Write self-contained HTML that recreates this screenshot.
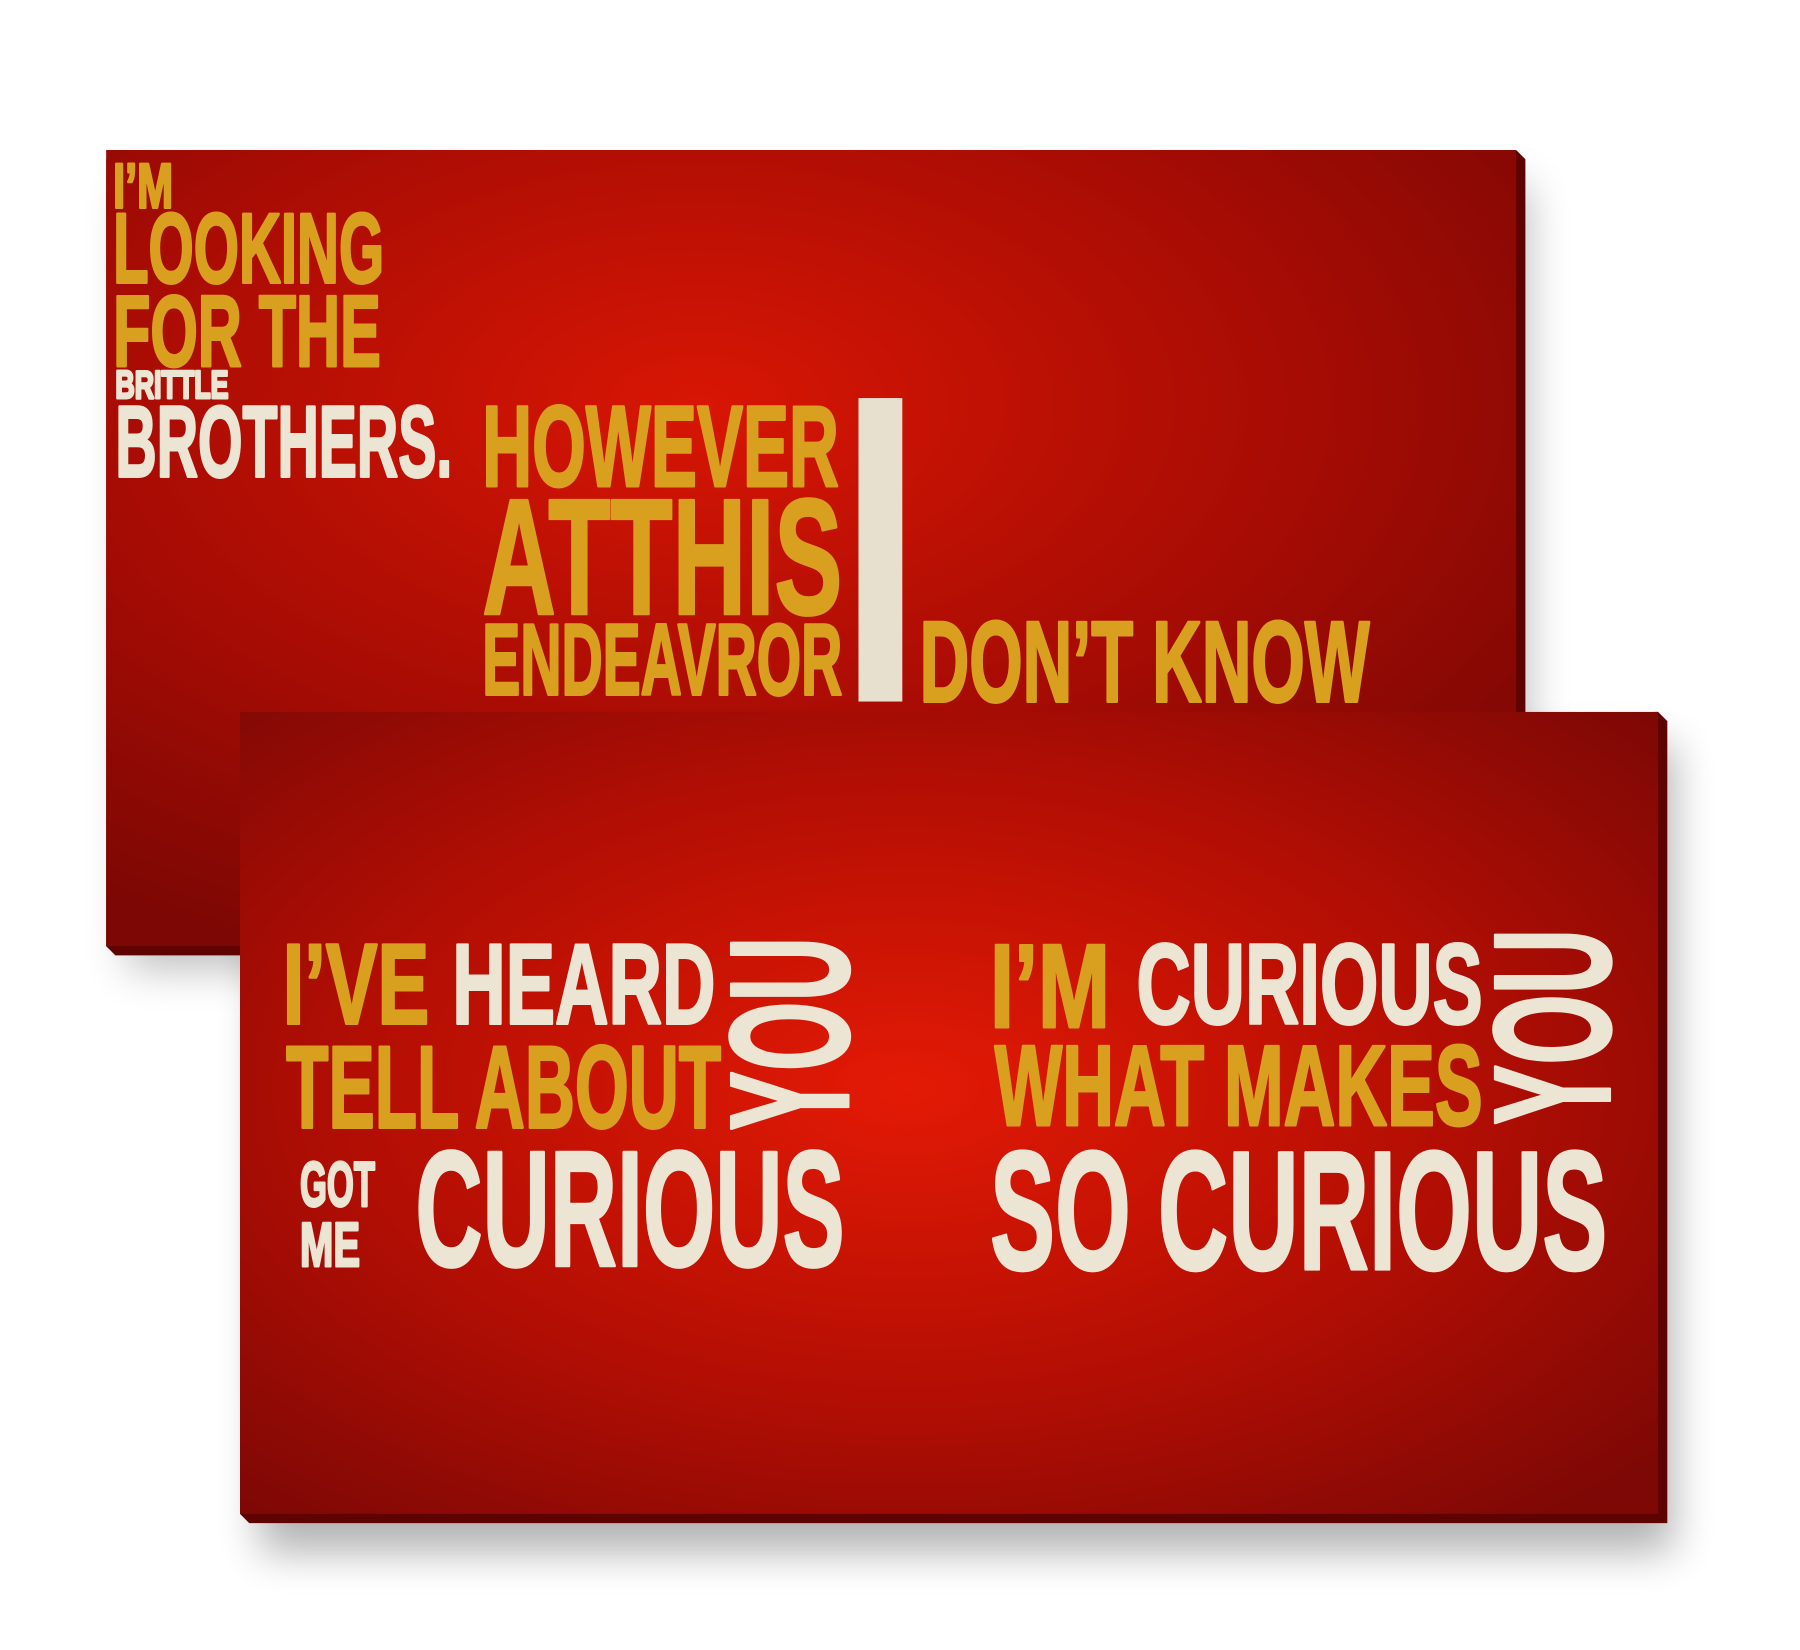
<!DOCTYPE html>
<html><head><meta charset="utf-8"><style>
html,body{margin:0;padding:0;background:#fff;width:1800px;height:1650px;overflow:hidden}
svg{display:block}
text{font-family:"Liberation Sans",sans-serif;font-weight:bold;stroke-linejoin:round}
.y{fill:#d9a020;stroke:#d9a020;stroke-width:2.5}.w{fill:#ede5d4;stroke:#ede5d4;stroke-width:2.5}
</style></head><body>
<svg width="1800" height="1650" viewBox="0 0 1560 1430" xmlns="http://www.w3.org/2000/svg">
<defs>
<radialGradient id="g1" cx="0.42" cy="0.32" r="0.75">
<stop offset="0" stop-color="#d81604"/><stop offset="0.55" stop-color="#a80c04"/><stop offset="1" stop-color="#7c0704"/>
</radialGradient>
<radialGradient id="g2" cx="0.47" cy="0.47" r="0.7">
<stop offset="0" stop-color="#e31a05"/><stop offset="0.55" stop-color="#b30e04"/><stop offset="1" stop-color="#7e0805"/>
</radialGradient>
<filter id="sh" x="-20%" y="-20%" width="140%" height="150%"><feGaussianBlur stdDeviation="18"/></filter>
</defs>
<rect x="110" y="160" width="1215" height="680" fill="#000" opacity="0.25" filter="url(#sh)"/>
<rect x="225" y="645" width="1225" height="700" fill="#000" opacity="0.3" filter="url(#sh)"/>
<path d="M92 138 L1314 130 L1322 138 L1322 828 L100 828 L92 820 Z" fill="#5e0302"/>
<rect x="92" y="130" width="1222" height="690" fill="url(#g1)"/>
<text class="y" x="98" y="180" font-size="55" textLength="52" lengthAdjust="spacingAndGlyphs">I’M</text>
<text class="y" x="98" y="245" font-size="86" textLength="235" lengthAdjust="spacingAndGlyphs">LOOKING</text>
<text class="y" x="98" y="317" font-size="88" textLength="232" lengthAdjust="spacingAndGlyphs">FOR THE</text>
<text class="w" x="100" y="345" font-size="34" textLength="98" lengthAdjust="spacingAndGlyphs">BRITTLE</text>
<text class="w" x="100" y="413" font-size="88" textLength="292" lengthAdjust="spacingAndGlyphs">BROTHERS.</text>
<text class="y" x="418" y="421" font-size="100" textLength="309" lengthAdjust="spacingAndGlyphs">HOWEVER</text>
<text class="y" x="418" y="532" font-size="143" textLength="312" lengthAdjust="spacingAndGlyphs">ATTHIS</text>
<text class="y" x="418" y="602" font-size="88" textLength="312" lengthAdjust="spacingAndGlyphs">ENDEAVROR</text>
<rect x="744" y="345" width="38" height="263" fill="#e8e0cf"/>
<text class="y" x="797" y="608" font-size="100" textLength="390" lengthAdjust="spacingAndGlyphs">DON’T KNOW</text>
<path d="M208 625 L1437 617 L1445 625 L1445 1320 L216 1320 L208 1312 Z" fill="#5e0302"/>
<rect x="208" y="617" width="1229" height="695" fill="url(#g2)"/>
<text class="y" x="245" y="887" font-size="99" textLength="127" lengthAdjust="spacingAndGlyphs">I’VE</text>
<text class="w" x="392" y="887" font-size="99" textLength="228" lengthAdjust="spacingAndGlyphs">HEARD</text>
<text class="y" x="248" y="977" font-size="101" textLength="377" lengthAdjust="spacingAndGlyphs">TELL ABOUT</text>
<text class="w" transform="translate(735,980) rotate(-90)" x="0" y="0" font-size="147" textLength="168" lengthAdjust="spacingAndGlyphs">YOU</text>
<text class="w" x="260" y="1045" font-size="55" textLength="65" lengthAdjust="spacingAndGlyphs">GOT</text>
<text class="w" x="260" y="1097" font-size="54" textLength="52" lengthAdjust="spacingAndGlyphs">ME</text>
<text class="w" x="360" y="1097" font-size="143" textLength="372" lengthAdjust="spacingAndGlyphs">CURIOUS</text>
<text class="y" x="858" y="890" font-size="103" textLength="104" lengthAdjust="spacingAndGlyphs">I’M</text>
<text class="w" x="985" y="887" font-size="99" textLength="300" lengthAdjust="spacingAndGlyphs">CURIOUS</text>
<text class="y" x="862" y="975" font-size="99" textLength="423" lengthAdjust="spacingAndGlyphs">WHAT MAKES</text>
<text class="w" transform="translate(1395,975) rotate(-90)" x="0" y="0" font-size="144" textLength="170" lengthAdjust="spacingAndGlyphs">YOU</text>
<text class="w" x="858" y="1100" font-size="147" textLength="535" lengthAdjust="spacingAndGlyphs">SO CURIOUS</text>
</svg>
</body></html>
